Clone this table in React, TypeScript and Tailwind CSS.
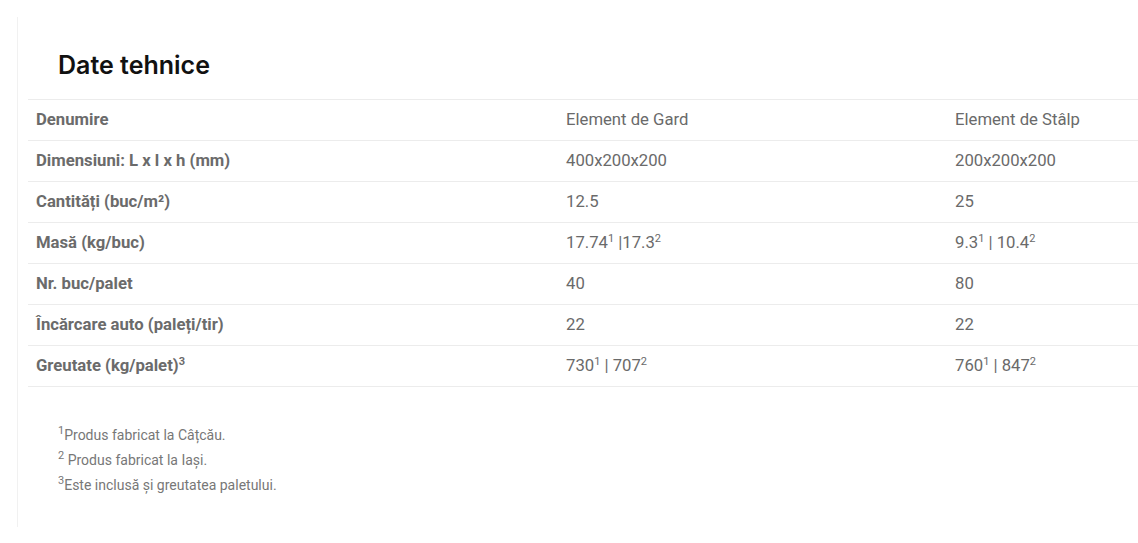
const rows: { label: React.ReactNode; a: React.ReactNode; b: React.ReactNode }[] = [
  { label: "Denumire", a: "Element de Gard", b: "Element de Stâlp" },
  { label: "Dimensiuni: L x l x h (mm)", a: "400x200x200", b: "200x200x200" },
  { label: "Cantități (buc/m²)", a: "12.5", b: "25" },
  {
    label: "Masă (kg/buc)",
    a: (
      <>
        17.74<Sup>1</Sup> |17.3<Sup>2</Sup>
      </>
    ),
    b: (
      <>
        9.3<Sup>1</Sup> | 10.4<Sup>2</Sup>
      </>
    ),
  },
  { label: "Nr. buc/palet", a: "40", b: "80" },
  { label: "Încărcare auto (paleți/tir)", a: "22", b: "22" },
  {
    label: (
      <>
        Greutate (kg/palet)<Sup>3</Sup>
      </>
    ),
    a: (
      <>
        730<Sup>1</Sup> | 707<Sup>2</Sup>
      </>
    ),
    b: (
      <>
        760<Sup>1</Sup> | 847<Sup>2</Sup>
      </>
    ),
  },
];

function Sup({ children }: { children: React.ReactNode }) {
  return <sup className="relative -top-[0.55em] text-[11px]">{children}</sup>;
}

export default function App() {
  return (
    <div className="min-h-[543px] overflow-hidden bg-white pl-[17px] pt-[17px] font-['Roboto',sans-serif]">
      <div className="h-[510px] border-l border-[#f1f1f1]">
        <h2 className="ml-[40px] pt-[32px] font-['Inter',sans-serif] text-[25px] leading-[32px] font-semibold text-[#111]">
          Date tehnice
        </h2>
        <table className="ml-[10px] mt-[18px] w-[1110px] border-collapse text-[16.7px] text-[#6a6a6a]">
          <tbody>
            {rows.map((r, i) => (
              <tr key={i} className="h-[41px] border-y border-[#ececec]">
                <td className="w-[530px] px-2 py-0 font-bold text-[#6b6b6b]">{r.label}</td>
                <td className="w-[389px] px-2 py-0">{r.a}</td>
                <td className="px-2 py-0">{r.b}</td>
              </tr>
            ))}
          </tbody>
        </table>
        <div className="ml-[40px] mt-[36px] text-[14px] leading-[25px] text-[#777]">
          <p>
            <Sup>1</Sup>Produs fabricat la Câțcău.
          </p>
          <p>
            <Sup>2</Sup> Produs fabricat la Iași.
          </p>
          <p>
            <Sup>3</Sup>Este inclusă și greutatea paletului.
          </p>
        </div>
      </div>
    </div>
  );
}
